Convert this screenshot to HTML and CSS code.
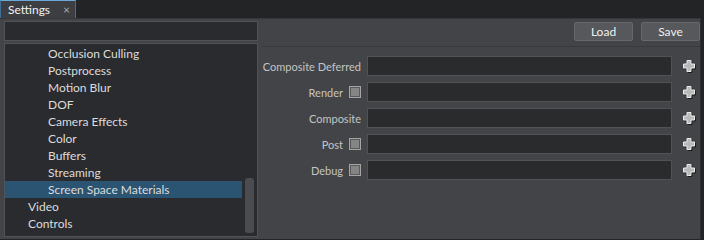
FILE: index.html
```html
<!DOCTYPE html>
<html lang="en">

<head>
    <meta charset="UTF-8">
    <title>Settings</title>
    <link rel="stylesheet" href="styles.css">
</head>

<body>
    <div class="tabbar">
        <div class="tab">Settings <span class="close">×</span></div>
    </div>

    <div class="panel">
        <div class="left">
            <input class="search" type="text">
            <div class="tree">
                <div class="items">
                    <div class="item child">Occlusion Culling</div>
                    <div class="item child">Postprocess</div>
                    <div class="item child">Motion Blur</div>
                    <div class="item child">DOF</div>
                    <div class="item child">Camera Effects</div>
                    <div class="item child">Color</div>
                    <div class="item child">Buffers</div>
                    <div class="item child">Streaming</div>
                    <div class="item child selected">Screen Space Materials</div>
                    <div class="item">Video</div>
                    <div class="item">Controls</div>
                </div>
                <div class="scroll"><div class="thumb"></div></div>
            </div>
        </div>

        <div class="right">
            <div class="toolbar">
                <button class="btn">Load</button>
                <button class="btn">Save</button>
            </div>

            <div class="rows">
                <div class="row">
                    <div class="label">Composite Deferred</div>
                    <div class="field"></div>
                    <svg class="plus" viewBox="0 0 14 14"><path d="M5 1.5h4v3.5h3.5v4h-3.5v3.5h-4v-3.5h-3.5v-4h3.5z" /></svg>
                </div>
                <div class="row">
                    <div class="label">Render <span class="check"></span></div>
                    <div class="field"></div>
                    <svg class="plus" viewBox="0 0 14 14"><path d="M5 1.5h4v3.5h3.5v4h-3.5v3.5h-4v-3.5h-3.5v-4h3.5z" /></svg>
                </div>
                <div class="row">
                    <div class="label">Composite</div>
                    <div class="field"></div>
                    <svg class="plus" viewBox="0 0 14 14"><path d="M5 1.5h4v3.5h3.5v4h-3.5v3.5h-4v-3.5h-3.5v-4h3.5z" /></svg>
                </div>
                <div class="row">
                    <div class="label">Post <span class="check"></span></div>
                    <div class="field"></div>
                    <svg class="plus" viewBox="0 0 14 14"><path d="M5 1.5h4v3.5h3.5v4h-3.5v3.5h-4v-3.5h-3.5v-4h3.5z" /></svg>
                </div>
                <div class="row">
                    <div class="label">Debug <span class="check"></span></div>
                    <div class="field"></div>
                    <svg class="plus" viewBox="0 0 14 14"><path d="M5 1.5h4v3.5h3.5v4h-3.5v3.5h-4v-3.5h-3.5v-4h3.5z" /></svg>
                </div>
            </div>
        </div>
    </div>
</body>

</html>
```

FILE: styles.css
```css
body {
    margin: 0;
    width: 704px;
    height: 240px;
    overflow: hidden;
    background: #232426;
    font-family: 'Lato', sans-serif;
    font-size: 12px;
    color: #dcdcdc;
}

.tabbar {
    height: 18px;
    display: flex;
}

.tab {
    width: 62px;
    height: 17px;
    padding-left: 7px;
    padding-right: 5px;
    background: #3c3e42;
    border-top: 1px solid #6aa8d8;
    border-left: 1px solid #3f6f95;
    border-right: 1px solid #3f6f95;
    display: flex;
    align-items: center;
    justify-content: space-between;
    font-size: 12px;
    color: #f2f2f2;
}

.close {
    color: #a8a8a8;
    font-size: 12px;
}

.panel {
    width: 701px;
    height: 221px;
    background: #424448;
    border-top: 1px solid #35363a;
    border-right: 1px solid #2e2f32;
    display: flex;
    padding-left: 4px;
    box-sizing: border-box;
}

.left {
    width: 254px;
    display: flex;
    flex-direction: column;
    padding-top: 2px;
}

.search {
    height: 20px;
    margin: 0;
    padding: 0;
    box-sizing: border-box;
    background: #2a2b2e;
    border: 1px solid #505256;
    outline: none;
}

.tree {
    margin-top: 2px;
    height: 194px;
    box-sizing: border-box;
    background: #2a2b2e;
    border: 1px solid #505256;
    display: flex;
    padding: 1px 0 0 0;
}

.items {
    width: 237px;
}

.item {
    height: 17px;
    line-height: 17px;
    padding-left: 23px;
    white-space: nowrap;
}

.item.child {
    padding-left: 43px;
}

.item.selected {
    background: #2b5472;
}

.scroll {
    width: 9px;
    margin-left: 3px;
    padding-top: 133px;
}

.thumb {
    height: 55px;
    background: #4b4c50;
    border-radius: 3px;
}

.right {
    flex: 1;
    padding-left: 4px;
    padding-top: 3px;
}

.toolbar {
    display: flex;
    justify-content: flex-end;
    gap: 8px;
    height: 24px;
    border-bottom: 1px solid #38393c;
}

.btn {
    width: 59px;
    height: 19px;
    margin: 0;
    padding: 0;
    background: #56585c;
    border: 1px solid #66686c;
    border-radius: 2px;
    color: #f0f0f0;
    font-family: 'Lato', sans-serif;
    font-size: 12px;
}

.rows {
    padding-top: 9px;
    display: flex;
    flex-direction: column;
    gap: 6px;
}

.row {
    display: flex;
    align-items: center;
    height: 20px;
}

.label {
    width: 99px;
    display: flex;
    justify-content: flex-end;
    align-items: center;
    gap: 6px;
    font-size: 11px;
    color: #c4c4c4;
    white-space: nowrap;
}

.check {
    width: 10px;
    height: 10px;
    border: 1px solid #a4a4a4;
    background: #858585;
    box-shadow: inset 0 0 0 1px #5a5a5a;
}

.field {
    width: 305px;
    height: 20px;
    margin-left: 6px;
    box-sizing: border-box;
    background: #2a2b2d;
    border: 1px solid #505256;
}

.plus {
    width: 14px;
    height: 14px;
    margin-left: 10px;
    fill: #b8b8b8;
    stroke: #ececec;
    stroke-width: 1;
    filter: drop-shadow(1px 1px 0 rgba(0, 0, 0, 0.6));
}
```
